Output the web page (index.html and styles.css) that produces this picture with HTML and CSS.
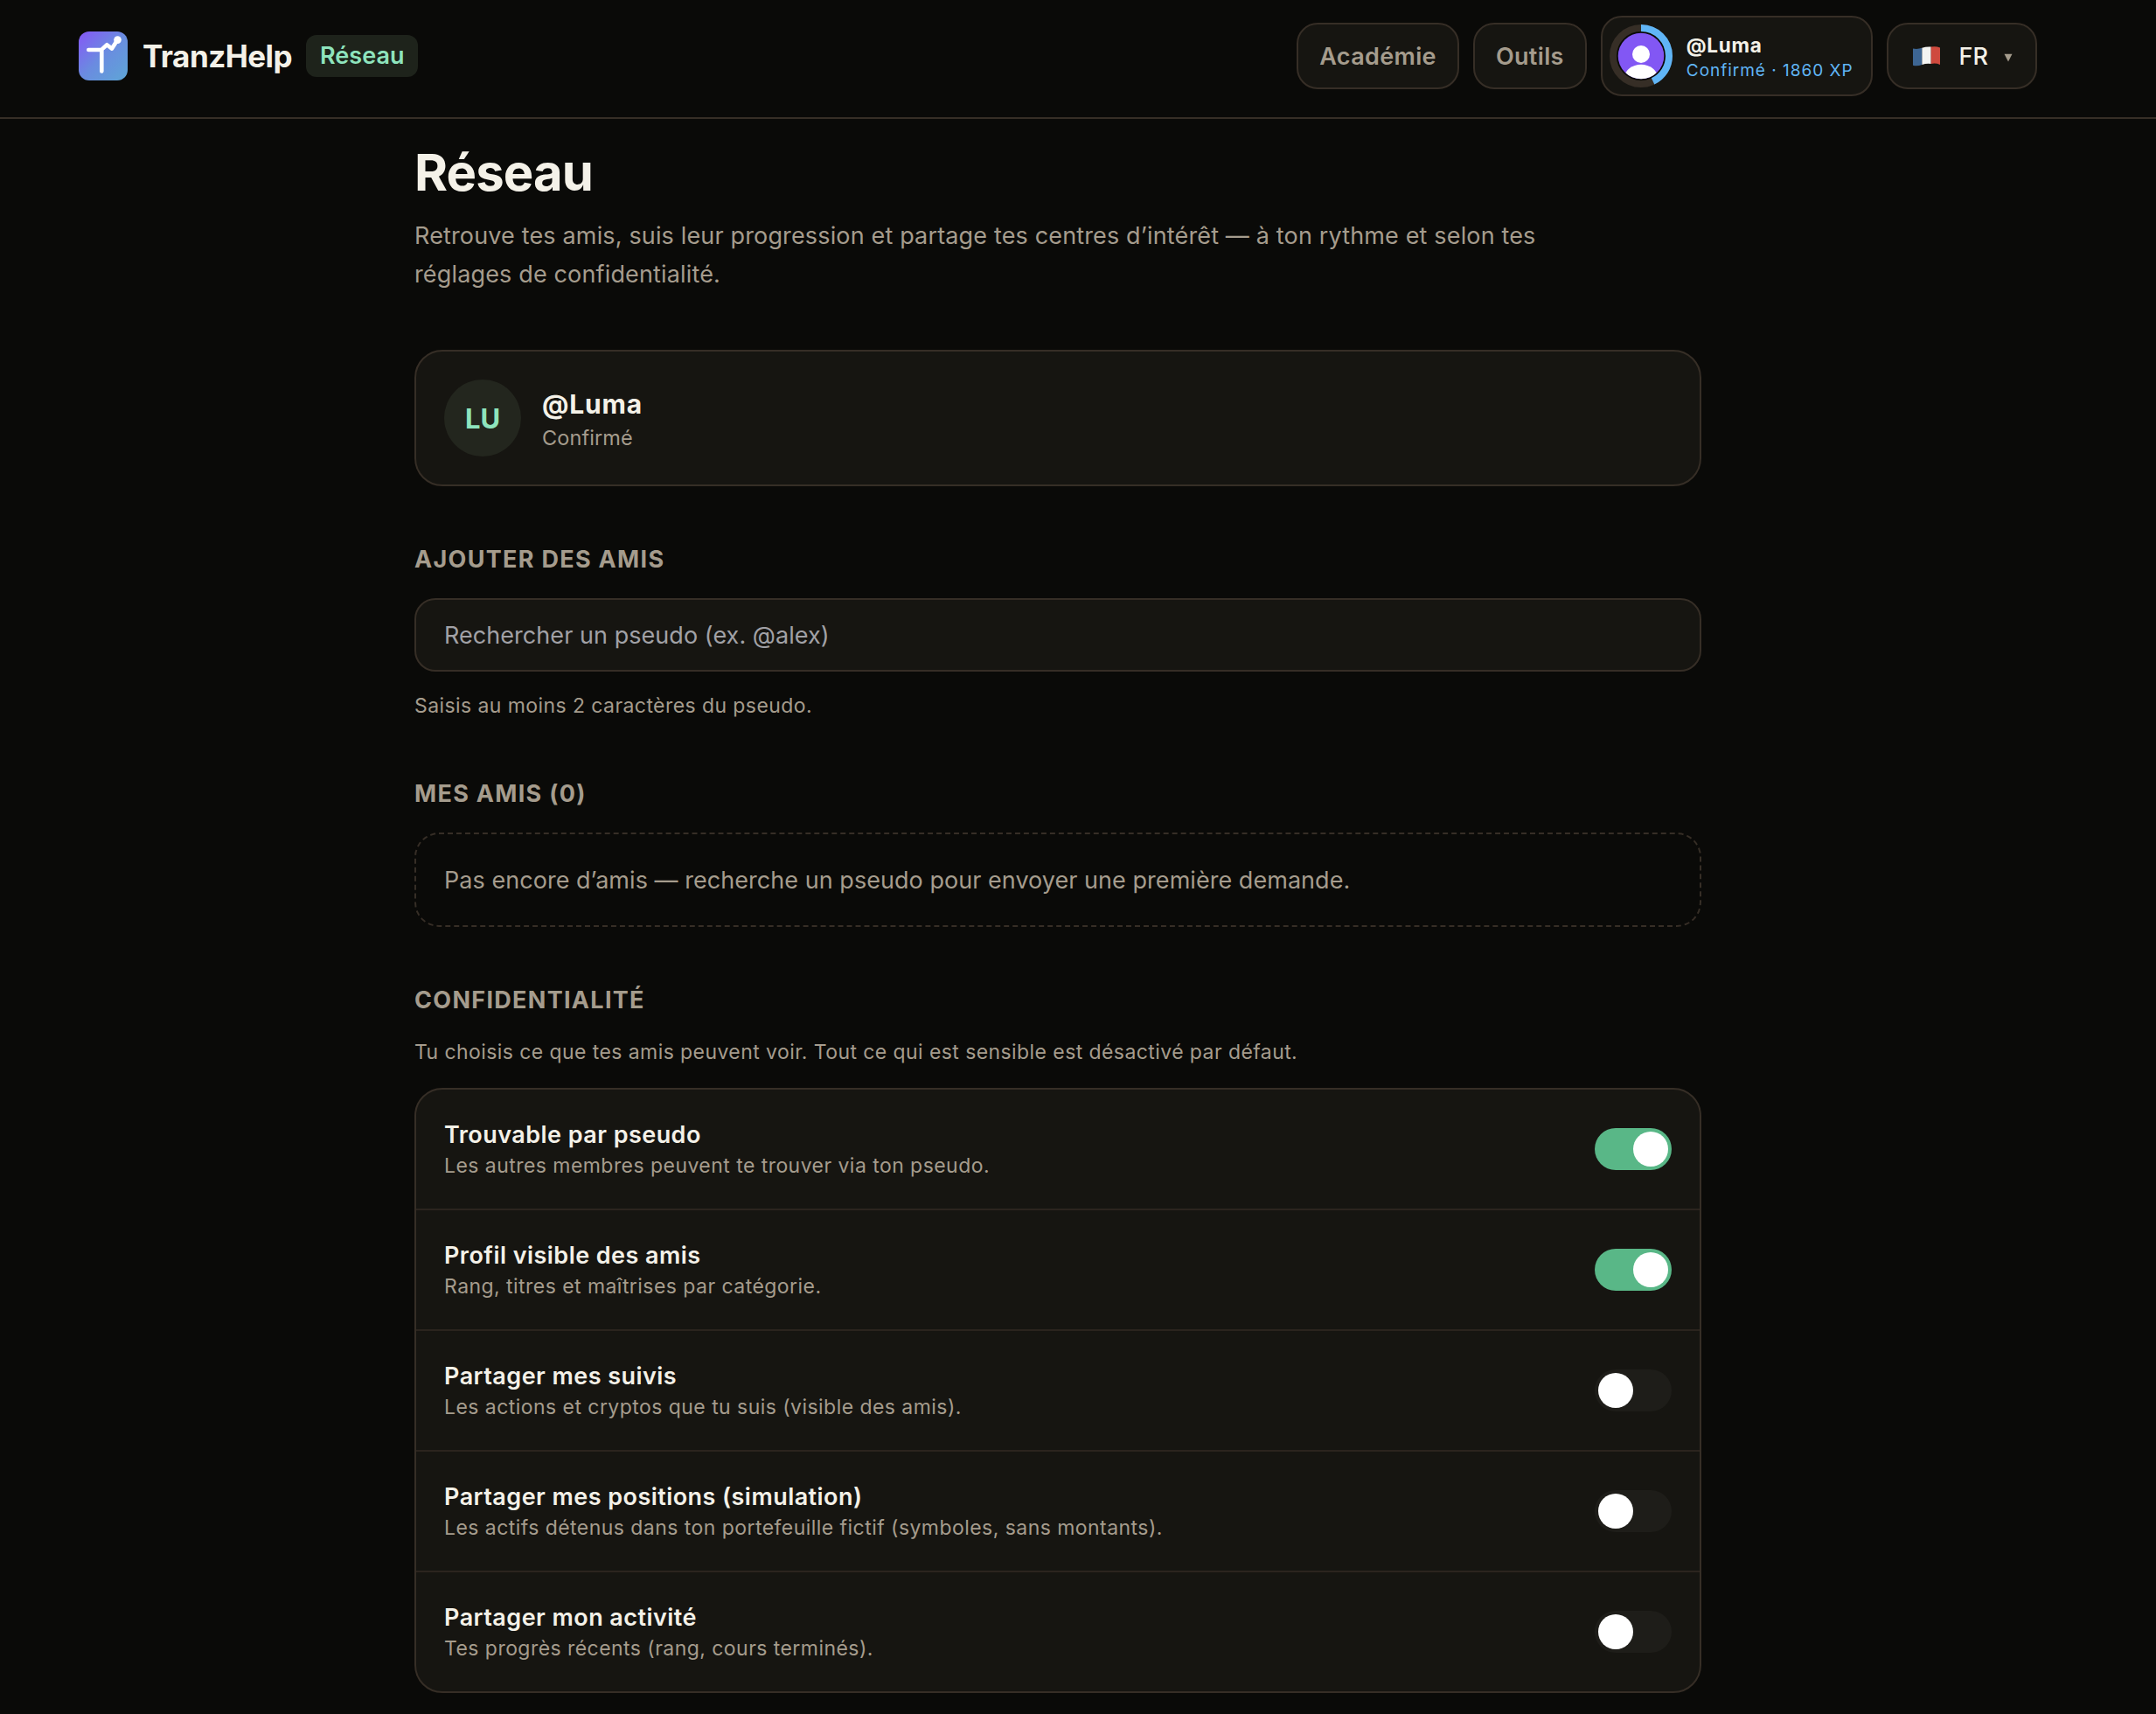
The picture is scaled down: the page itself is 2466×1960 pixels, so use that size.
FILE: index.html
```html
<!DOCTYPE html>
<html lang="fr">
<head>
    <meta charset="UTF-8">
    <meta name="viewport" content="width=device-width, initial-scale=1.0">
    <title>Réseau - TranzHelp</title>
    <link rel="stylesheet" href="styles.css">
</head>
<body>
    <header class="topbar">
        <a href="#" class="brand">
            <svg class="brand-logo" viewBox="0 0 56 56" fill="none">
                <defs>
                    <linearGradient id="logoGradient" x1="0" y1="0" x2="1" y2="1">
                        <stop offset="0" stop-color="#8657f6"/>
                        <stop offset="0.5" stop-color="#6a8ce0"/>
                        <stop offset="1" stop-color="#5ea6d6"/>
                    </linearGradient>
                </defs>
                <rect width="56" height="56" rx="12" fill="url(#logoGradient)"/>
                <path d="M11.3 21H26.3V45.5M26.3 20.6L32.3 15.2L38 19.6L44.3 9.7" stroke="#fff" stroke-width="4.6" stroke-linecap="round" stroke-linejoin="round"/>
                <circle cx="44.5" cy="9.6" r="4.3" fill="#fff"/>
            </svg>
            <span class="brand-name">TranzHelp</span>
            <span class="brand-badge">Réseau</span>
        </a>

        <nav class="topbar-nav">
            <a href="#" class="pill">Académie</a>
            <a href="#" class="pill">Outils</a>
            <a href="#" class="user-pill">
                <svg class="user-ring" viewBox="0 0 72 72">
                    <defs>
                        <clipPath id="avatarClip"><circle cx="36" cy="36" r="26.3"/></clipPath>
                    </defs>
                    <circle cx="36" cy="36" r="32" fill="#0a0a08" stroke="#362e26" stroke-width="8"/>
                    <circle cx="36" cy="36" r="32" fill="none" stroke="#60b5f6" stroke-width="8" pathLength="100" stroke-dasharray="43 57" transform="rotate(-90 36 36)"/>
                    <g clip-path="url(#avatarClip)">
                        <rect width="72" height="72" fill="#8257f4"/>
                        <circle cx="36" cy="34" r="10" fill="#fff"/>
                        <ellipse cx="36" cy="60" rx="18.6" ry="14.2" fill="#fff"/>
                    </g>
                </svg>
                <span class="user-text">
                    <span class="user-name">@Luma</span>
                    <span class="user-rank">Confirmé · 1860 XP</span>
                </span>
            </a>
            <button class="lang-btn">
                <svg class="lang-flag" viewBox="0 0 31 23">
                    <path d="M0 2.5Q5 3.6 10.4 1.8V21Q5 23.2 0 21.8Z" fill="#3d6593"/>
                    <path d="M10.4 1.8Q15 0.2 20.7 0.6V20Q15 19.4 10.4 21Z" fill="#f4f4f2"/>
                    <path d="M20.7 0.6Q26 -0.6 31 1.4V21Q26 18.8 20.7 20Z" fill="#cf4a3e"/>
                </svg>
                <span class="lang-code">FR</span>
                <svg class="lang-caret" viewBox="0 0 10 10"><path d="M0.5 0.8H9.5L5 9.4Z" fill="#a59c8d"/></svg>
            </button>
        </nav>
    </header>

    <main class="page">
        <h1 class="page-title">Réseau</h1>
        <p class="page-lead">Retrouve tes amis, suis leur progression et partage tes centres d’intérêt — à ton rythme et selon tes réglages de confidentialité.</p>

        <section class="profile-card">
            <div class="profile-avatar">LU</div>
            <div class="profile-text">
                <div class="profile-name">@Luma</div>
                <div class="profile-rank">Confirmé</div>
            </div>
        </section>

        <section class="block">
            <h2 class="block-title">Ajouter des amis</h2>
            <input class="search" type="text" placeholder="Rechercher un pseudo (ex. @alex)">
            <p class="hint">Saisis au moins 2 caractères du pseudo.</p>
        </section>

        <section class="block">
            <h2 class="block-title">Mes amis (0)</h2>
            <div class="empty">Pas encore d’amis — recherche un pseudo pour envoyer une première demande.</div>
        </section>

        <section class="block">
            <h2 class="block-title">Confidentialité</h2>
            <p class="hint">Tu choisis ce que tes amis peuvent voir. Tout ce qui est sensible est désactivé par défaut.</p>
            <ul class="settings">
                <li class="setting">
                    <div class="setting-text">
                        <div class="setting-title">Trouvable par pseudo</div>
                        <div class="setting-desc">Les autres membres peuvent te trouver via ton pseudo.</div>
                    </div>
                    <span class="toggle on"></span>
                </li>
                <li class="setting">
                    <div class="setting-text">
                        <div class="setting-title">Profil visible des amis</div>
                        <div class="setting-desc">Rang, titres et maîtrises par catégorie.</div>
                    </div>
                    <span class="toggle on"></span>
                </li>
                <li class="setting">
                    <div class="setting-text">
                        <div class="setting-title">Partager mes suivis</div>
                        <div class="setting-desc">Les actions et cryptos que tu suis (visible des amis).</div>
                    </div>
                    <span class="toggle"></span>
                </li>
                <li class="setting">
                    <div class="setting-text">
                        <div class="setting-title">Partager mes positions (simulation)</div>
                        <div class="setting-desc">Les actifs détenus dans ton portefeuille fictif (symboles, sans montants).</div>
                    </div>
                    <span class="toggle"></span>
                </li>
                <li class="setting">
                    <div class="setting-text">
                        <div class="setting-title">Partager mon activité</div>
                        <div class="setting-desc">Tes progrès récents (rang, cours terminés).</div>
                    </div>
                    <span class="toggle"></span>
                </li>
            </ul>
        </section>
    </main>
</body>
</html>
```
FILE: styles.css
```css
* {
    margin: 0;
    padding: 0;
    box-sizing: border-box;
}

:root {
    --bg: #0a0a08;
    --card: #161511;
    --border: #362e26;
    --text: #f4f1e8;
    --muted: #a59c8d;
    --green: #8ee4bd;
}

body {
    font-family: Inter, -apple-system, BlinkMacSystemFont, 'Segoe UI', sans-serif;
    background: var(--bg);
    color: var(--text);
    font-size: 27px;
    min-height: 100vh;
}

a {
    color: inherit;
    text-decoration: none;
}

/* Header */
.topbar {
    display: flex;
    align-items: center;
    justify-content: space-between;
    height: 136px;
    padding: 18px 136px 24px 90px;
    border-bottom: 2px solid var(--border);
}

.brand {
    display: flex;
    align-items: center;
}

.brand-logo {
    width: 56px;
    height: 56px;
    margin-right: 17px;
}

.brand-name {
    font-size: 35px;
    font-weight: 750;
    letter-spacing: -0.53px;
    margin-right: 16px;
}

.brand-badge {
    height: 48px;
    line-height: 48px;
    padding: 0 16px;
    border-radius: 12px;
    background: #1e231b;
    color: var(--green);
    font-weight: 600;
}

.topbar-nav {
    display: flex;
    align-items: center;
    gap: 16px;
}

.pill,
.user-pill,
.lang-btn {
    display: flex;
    align-items: center;
    height: 76px;
    border: 2px solid var(--border);
    border-radius: 24px;
    background: var(--card);
}

.pill {
    padding: 0 24px;
    color: var(--muted);
    font-weight: 600;
    letter-spacing: 0.35px;
}

.user-pill {
    height: 92px;
    padding: 0 20px 0 8px;
    gap: 16px;
}

.user-ring {
    width: 72px;
    height: 72px;
}

.user-text {
    display: flex;
    flex-direction: column;
    padding-top: 6px;
}

.user-name {
    font-size: 22.5px;
    line-height: 28px;
    font-weight: 650;
    letter-spacing: 0.7px;
}

.user-rank {
    font-size: 19px;
    line-height: 30px;
    letter-spacing: 0.98px;
    color: #60b5f6;
}

.lang-btn {
    padding: 0 26px 0 28px;
    color: var(--text);
    font: inherit;
    font-weight: 500;
}

.lang-flag {
    width: 31px;
    height: 23px;
    margin-right: 22px;
}

.lang-caret {
    width: 10px;
    height: 10px;
    margin: 4px 0 0 18px;
}

/* Page */
.page {
    width: 1472px;
    margin-left: 474px;
    padding-top: 26px;
}

.page-title {
    font-size: 58px;
    line-height: 70px;
    font-weight: 750;
    letter-spacing: -0.9px;
}

.page-lead {
    max-width: 1340px;
    margin-top: 16px;
    line-height: 44px;
    letter-spacing: 0.15px;
    color: var(--muted);
}

.profile-card {
    display: flex;
    align-items: center;
    gap: 24px;
    height: 156px;
    margin-top: 64px;
    padding: 0 32px;
    border: 2px solid var(--border);
    border-radius: 32px;
    background: var(--card);
}

.profile-avatar {
    display: flex;
    align-items: center;
    justify-content: center;
    width: 88px;
    height: 88px;
    border-radius: 50%;
    background: #23261e;
    color: var(--green);
    font-size: 31px;
    font-weight: 700;
}

.profile-text {
    padding-top: 6px;
}

.profile-name {
    font-size: 30px;
    line-height: 38px;
    font-weight: 650;
    letter-spacing: 0.8px;
}

.profile-rank {
    font-size: 23.5px;
    line-height: 39px;
    letter-spacing: 0.1px;
    color: var(--muted);
}

.block {
    margin-top: 64px;
}

.block-title {
    font-size: 27px;
    line-height: 40px;
    font-weight: 650;
    letter-spacing: 1.3px;
    color: var(--muted);
    text-transform: uppercase;
}

.search {
    display: block;
    width: 100%;
    height: 84px;
    margin-top: 24px;
    padding: 0 32px;
    border: 2px solid var(--border);
    border-radius: 24px;
    background: var(--card);
    color: var(--text);
    font: inherit;
    letter-spacing: 0.05px;
}

.search::placeholder {
    color: #a1a1a6;
}

.hint {
    margin: 24px 0;
    padding-bottom: 2px;
    font-size: 23px;
    line-height: 30px;
    letter-spacing: 0.42px;
    color: var(--muted);
}

.empty {
    display: flex;
    align-items: center;
    height: 108px;
    margin-top: 24px;
    padding: 0 32px;
    border: 2px dashed var(--border);
    border-radius: 28px;
    letter-spacing: 0.04px;
    color: var(--muted);
}

.settings {
    list-style: none;
    border: 2px solid var(--border);
    border-radius: 32px;
    background: var(--card);
}

.setting {
    display: flex;
    align-items: center;
    justify-content: space-between;
    height: 138px;
    padding: 0 32px;
    border-bottom: 2px solid #2b241e;
}

.setting:last-child {
    height: 136px;
    border-bottom: none;
}

.setting-text {
    padding-top: 2px;
}

.setting-title {
    line-height: 36px;
    font-weight: 600;
    letter-spacing: 0.45px;
}

.setting-desc {
    font-size: 23px;
    line-height: 34px;
    letter-spacing: 0.45px;
    color: var(--muted);
}

.toggle {
    width: 88px;
    height: 48px;
    padding: 4px;
    border-radius: 24px;
    background: #1e1d19;
}

.toggle::before {
    content: '';
    display: block;
    width: 40px;
    height: 40px;
    border-radius: 50%;
    background: #fff;
}

.toggle.on {
    background: #59b787;
}

.toggle.on::before {
    margin-left: auto;
}
```
